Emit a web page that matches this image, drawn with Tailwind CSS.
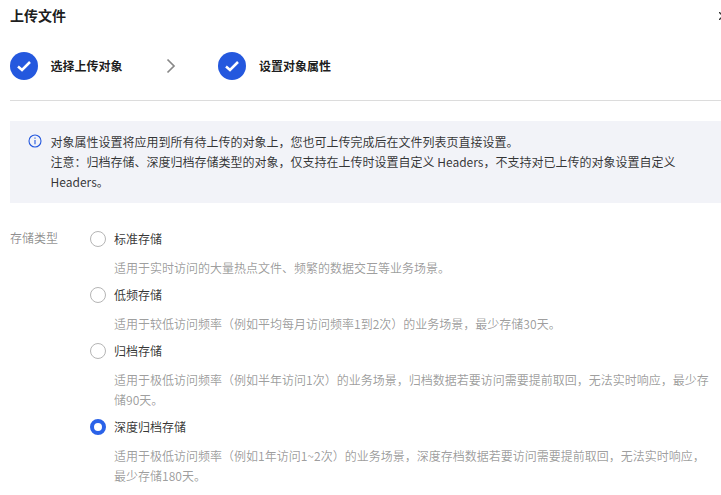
<!DOCTYPE html>
<html lang="zh-CN">
<head>
<meta charset="utf-8">
<script src="https://cdn.jsdelivr.net/npm/@tailwindcss/browser@4"></script>
</head>
<body class="bg-white overflow-hidden font-['Noto_Sans_CJK_SC','Noto_Sans',sans-serif] text-xs leading-5 text-black/90">
<div class="relative h-[495px] w-[721px] overflow-hidden pl-2.5">
  <svg class="absolute left-[719px] top-[12px]" width="8" height="8" viewBox="0 0 8 8" fill="none" stroke="#333" stroke-width="1.3"><path d="M0 0l8 8M8 0L0 8"/></svg>
  <h2 class="pt-[3px] text-sm leading-6 font-semibold text-black/90">上传文件</h2>
  <div class="mt-[25px] flex h-7 items-center">
    <span class="flex size-7 items-center justify-center rounded-full bg-[#2458de]">
      <svg width="14" height="12" viewBox="0 0 14 12" fill="none" stroke="#fff" stroke-width="2.500"><path d="M1 6.500l4 3.500 8-8"/></svg>
    </span>
    <span class="ml-[12.500px] w-[72px] font-semibold whitespace-nowrap">选择上传对象</span>
    <svg class="ml-[41.500px]" width="14" height="16" viewBox="0 0 14 16" fill="none" stroke="#888" stroke-width="1.700"><path d="M3.500 1.500L10 8l-6.500 6.500"/></svg>
    <span class="ml-10 flex size-7 items-center justify-center rounded-full bg-[#2458de]">
      <svg width="14" height="12" viewBox="0 0 14 12" fill="none" stroke="#fff" stroke-width="2.500"><path d="M1 6.500l4 3.500 8-8"/></svg>
    </span>
    <span class="ml-[13px] font-semibold whitespace-nowrap">设置对象属性</span>
  </div>
  <div class="mt-5 h-px bg-[#dcdcdc]"></div>
  <div class="mt-5 flex h-[82px] bg-[#f2f3f8] pt-[11px] pl-[18px]">
    <svg class="mt-[2px] shrink-0" width="14" height="14" viewBox="0 0 14 14" fill="none" stroke="#2458de" stroke-width="1.100"><circle cx="7" cy="7" r="6"/><path d="M7 6v4.200M7 3.400v1.400"/></svg>
    <p class="ml-[8.500px] w-[660px] text-black/80">对象属性设置将应用到所有待上传的对象上，您也可上传完成后在文件列表页直接设置。<br>注意：归档存储、深度归档存储类型的对象，仅支持在上传时设置自定义 Headers，不支持对已上传的对象设置自定义 Headers。</p>
  </div>
  <div class="mt-[25px] flex">
    <div class="w-20 shrink-0 text-black/45">存储类型</div>
    <div class="w-[620px] pt-px">
      <label class="flex h-5 items-center"><span class="size-4 rounded-full border border-[#b5b5b5]"></span><span class="ml-2 text-black/80">标准存储</span></label>
      <p class="mt-[9px] h-5 pl-6 text-black/40 whitespace-nowrap">适用于实时访问的大量热点文件、频繁的数据交互等业务场景。</p>
      <label class="mt-[7px] flex h-5 items-center"><span class="size-4 rounded-full border border-[#b5b5b5]"></span><span class="ml-2 text-black/80">低频存储</span></label>
      <p class="mt-[9px] h-5 pl-6 text-black/40 whitespace-nowrap">适用于较低访问频率（例如平均每月访问频率1到2次）的业务场景，最少存储30天。</p>
      <label class="mt-[7px] flex h-5 items-center"><span class="size-4 rounded-full border border-[#b5b5b5]"></span><span class="ml-2 text-black/80">归档存储</span></label>
      <p class="mt-[9px] pl-6 text-black/40">适用于极低访问频率（例如半年访问1次）的业务场景，归档数据若要访问需要提前取回，无法实时响应，最少存储90天。</p>
      <label class="mt-[7px] flex h-5 items-center"><span class="size-4 rounded-full border-[4px] border-[#2a62e8]"></span><span class="ml-2 text-black/80">深度归档存储</span></label>
      <p class="mt-[8.500px] pl-6 text-black/40">适用于极低访问频率（例如1年访问1~2次）的业务场景，深度存档数据若要访问需要提前取回，无法实时响应，最少存储180天。</p>
    </div>
  </div>
</div>
</body>
</html>
